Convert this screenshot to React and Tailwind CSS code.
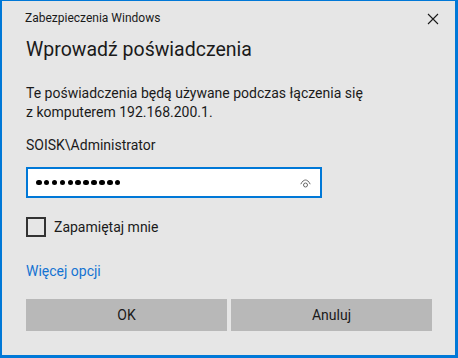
export default function App() {
  return (
    <div className="w-[458px] h-[358px] bg-[#0078d7] pl-[2px] pt-[1px] font-['Roboto',sans-serif] text-[#1a1a1a]">
      <div className="w-[453px] h-[354px] bg-[#e6e6e6] pl-[24px] pr-[23px] pt-[9px] flex flex-col">
        {/* title bar */}
        <div className="flex items-center justify-between h-[16px]">
          <span className="text-[12px] leading-[16px] -ml-[1px]">Zabezpieczenia Windows</span>
          <svg width="12" height="12" viewBox="0 0 12 12" className="mr-[-7px] mt-[2px]">
            <path d="M1 1L11 11M11 1L1 11" stroke="#1a1a1a" strokeWidth="1.1" fill="none" />
          </svg>
        </div>

        <h1 className="mt-[11px] text-[19.5px] leading-[26px] font-normal">Wprowadź poświadczenia</h1>

        <p className="mt-[21px] text-[14px] leading-[18.5px]">
          Te poświadczenia będą używane podczas łączenia się
          <br />z komputerem 192.168.200.1.
        </p>

        <div className="mt-[15px] text-[14px] leading-[19px]">SOISK\Administrator</div>

        {/* password */}
        <div className="mt-[12px] w-[296px] h-[31px] bg-white border-2 border-[#0078d7] flex items-center pl-[8px] pr-[9px]">
          <div className="flex gap-[2.4px]">
            {Array.from({ length: 11 }).map((_, i) => (
              <span key={i} className="w-[5.5px] h-[5.5px] rounded-full bg-black" />
            ))}
          </div>
          <svg width="11" height="9" viewBox="0 0 11 9" className="ml-auto mt-[1px]">
            <path d="M0.8 5.2C2.2 2.2 4 1 5.5 1S8.8 2.2 10.2 5.2" stroke="#666" strokeWidth="1" fill="none" />
            <circle cx="5.5" cy="6" r="2" stroke="#666" strokeWidth="1" fill="none" />
          </svg>
        </div>

        {/* remember */}
        <div className="mt-[19px] flex items-center gap-[8px]">
          <span className="w-[20px] h-[20px] border-2 border-[#333333] bg-transparent" />
          <span className="text-[14px] leading-[19px]">Zapamiętaj mnie</span>
        </div>

        <div className="mt-[25px] text-[14px] leading-[19px] text-[#1473d2]">Więcej opcji</div>

        {/* buttons */}
        <div className="mt-[18px] grid grid-cols-2 gap-[4px]">
          <button className="h-[32px] bg-[#b8b8b8] text-[14px] font-normal text-[#1a1a1a]">OK</button>
          <button className="h-[32px] bg-[#b8b8b8] text-[14px] font-normal text-[#1a1a1a]">Anuluj</button>
        </div>
      </div>
    </div>
  );
}
